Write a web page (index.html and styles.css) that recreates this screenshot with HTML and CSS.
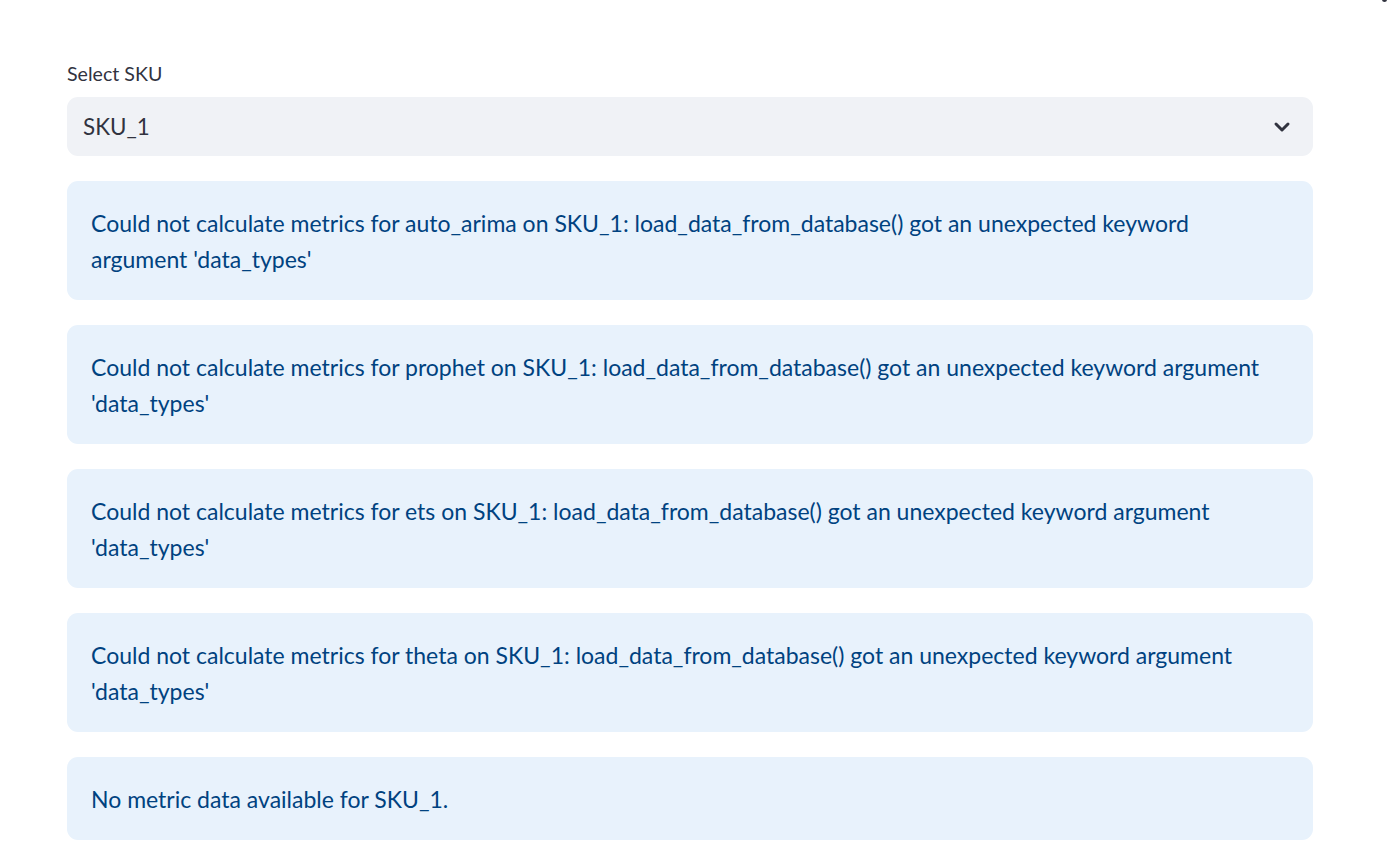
FILE: index.html
```html
<!DOCTYPE html>
<html lang="en">
<head>
<meta charset="utf-8">
<title>SKU metrics</title>
<link rel="stylesheet" href="styles.css">
</head>
<body>
<span class="menu-dot"></span>
<main class="main">
  <div class="field">
    <label class="field-label">Select SKU</label>
    <div class="select">
      <span class="select-value">SKU_1</span>
      <svg class="chevron" width="18" height="12" viewBox="0 0 18 12" aria-hidden="true">
        <path d="M3 3 L9 9 L15 3" fill="none" stroke="#31333f" stroke-width="3" stroke-linecap="round" stroke-linejoin="round"/>
      </svg>
    </div>
  </div>
  <div class="alert">Could not calculate metrics for auto_arima on SKU_1: load_data_from_database() got an unexpected keyword argument 'data_types'</div>
  <div class="alert">Could not calculate metrics for prophet on SKU_1: load_data_from_database() got an unexpected keyword argument 'data_types'</div>
  <div class="alert">Could not calculate metrics for ets on SKU_1: load_data_from_database() got an unexpected keyword argument 'data_types'</div>
  <div class="alert">Could not calculate metrics for theta on SKU_1: load_data_from_database() got an unexpected keyword argument 'data_types'</div>
  <div class="alert">No metric data available for SKU_1.</div>
</main>
</body>
</html>
```
FILE: styles.css
```css
html, body {
  margin: 0;
  padding: 0;
  background: #ffffff;
}
body {
  font-family: "Lato", "Liberation Sans", sans-serif;
  color: #31333f;
  overflow: hidden;
  height: 865px;
  position: relative;
}
.menu-dot {
  position: absolute;
  top: -3px;
  left: 1382px;
  width: 5px;
  height: 5px;
  border-radius: 50%;
  background: #31333f;
}
.main {
  width: 1246px;
  margin-left: 67px;
  padding-top: 59px;
  display: flex;
  flex-direction: column;
  gap: 25px;
}
.field {
  display: flex;
  flex-direction: column;
}
.field-label {
  font-size: 19.6px;
  line-height: 29px;
  height: 29px;
  margin-bottom: 9px;
  color: #31333f;
}
.select {
  height: 59px;
  box-sizing: border-box;
  background: #f0f2f6;
  border-radius: 11px;
  display: flex;
  align-items: center;
  justify-content: space-between;
  padding: 0 22px 0 16px;
}
.select-value {
  font-size: 22.4px;
  color: #31333f;
}
.chevron {
  display: block;
}
.alert {
  background: #e8f2fc;
  color: #004280;
  border-radius: 11px;
  padding: 23.5px 42px 23.5px 24px;
  font-size: 23px;
  line-height: 36px;
}
```
